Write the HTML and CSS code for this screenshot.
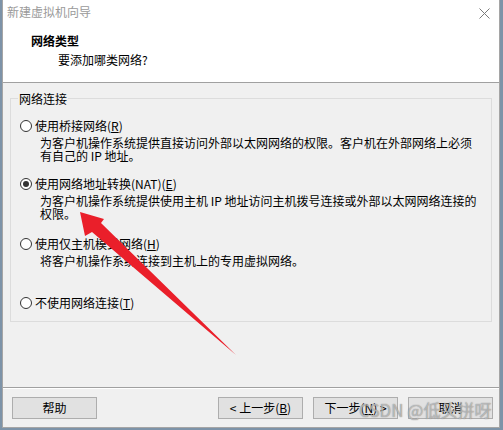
FILE: index.html
```html
<!DOCTYPE html>
<html lang="zh-CN">
<head>
<meta charset="utf-8">
<title>新建虚拟机向导</title>
<link rel="stylesheet" href="styles.css">
</head>
<body>
<div class="window">
  <div class="titlebar">
    <span class="title">新建虚拟机向导</span>
    <svg class="close" width="11" height="11" viewBox="0 0 11 11"><path d="M0.5 0.5 L10.5 10.5 M10.5 0.5 L0.5 10.5" stroke="#7a7a7a" stroke-width="1" fill="none"/></svg>
  </div>
  <div class="header">
    <div class="h-title">网络类型</div>
    <div class="h-sub">要添加哪类网络?</div>
  </div>
  <div class="content">
    <fieldset class="group">
      <legend>网络连接</legend>
      <div class="option o1">
        <div class="opt-label"><span class="radio"></span><span>使用桥接网络(<u>R</u>)</span></div>
        <div class="opt-desc">为客户机操作系统提供直接访问外部以太网网络的权限。客户机在外部网络上必须<br>有自己的 IP 地址。</div>
      </div>
      <div class="option o2">
        <div class="opt-label"><span class="radio checked"></span><span>使用网络地址转换(NAT)(<u>E</u>)</span></div>
        <div class="opt-desc">为客户机操作系统提供使用主机 IP 地址访问主机拨号连接或外部以太网网络连接的<br>权限。</div>
      </div>
      <div class="option o3">
        <div class="opt-label"><span class="radio"></span><span>使用仅主机模式网络(<u>H</u>)</span></div>
        <div class="opt-desc">将客户机操作系统连接到主机上的专用虚拟网络。</div>
      </div>
      <div class="option o4">
        <div class="opt-label"><span class="radio"></span><span>不使用网络连接(<u>T</u>)</span></div>
      </div>
    </fieldset>
  </div>
  <div class="footer">
    <button class="btn">帮助</button>
    <div class="btn-group">
      <button class="btn">&lt; 上一步(<u>B</u>)</button>
      <button class="btn">下一步(<u>N</u>) &gt;</button>
      <button class="btn">取消</button>
    </div>
  </div>
</div>
<svg class="arrow" width="503" height="430" viewBox="0 0 503 430">
  <polygon points="80,212 104,219 101,223 236,355 92,232 85,236" fill="#ea1f2a"/>
</svg>
<div class="watermark">CSDN @低头拼呀</div>
</body>
</html>
```
FILE: styles.css
```css
html, body {
  margin: 0;
  padding: 0;
}
body {
  width: 503px;
  height: 430px;
  background: #7d93a8;
  font-family: "Noto Sans CJK SC", "Noto Sans", sans-serif;
  font-size: 12px;
  color: #000;
  position: relative;
  overflow: hidden;
}
.window {
  margin-left: 2px;
  width: 498px;
  height: 428px;
  box-sizing: border-box;
  border-left: 1px solid #a5a5a5;
  border-right: 1px solid #a5a5a5;
  border-bottom: 1px solid #a5a5a5;
  background: #f0f0f0;
  display: flex;
  flex-direction: column;
}
.titlebar {
  height: 26px;
  background: #fff;
  display: flex;
  justify-content: space-between;
  align-items: flex-start;
  padding: 5px 9px 0 4px;
  box-sizing: border-box;
}
.title {
  line-height: 14px;
  color: #9a9a9a;
}
.close {
  margin-top: 3px;
  display: block;
}
.header {
  height: 57px;
  box-sizing: border-box;
  background: #fff;
  border-bottom: 1px solid #a0a0a0;
  padding-top: 8px;
}
.h-title {
  padding-left: 28px;
  font-weight: bold;
  line-height: 14px;
}
.h-sub {
  padding-left: 55px;
  margin-top: 5px;
  line-height: 14px;
}
.content {
  height: 305px;
  box-sizing: border-box;
  border-bottom: 1px solid #a0a0a0;
  box-shadow: 0 1px 0 #fff;
  padding: 9px 7px 0 7px;
}
.group {
  margin: 0;
  padding: 0 0 12px 9px;
  border: 1px solid #dcdcdc;
  min-width: 0;
}
.group legend {
  margin-left: -2px;
  padding: 0 1px;
  line-height: 13px;
}
.option {
  line-height: 13px;
}
.o1 { margin-top: 14px; }
.o2 { margin-top: 15px; }
.o3 { margin-top: 17px; }
.o4 { margin-top: 29px; }
.opt-label {
  display: flex;
  align-items: center;
  height: 13px;
  white-space: nowrap;
}
.radio {
  width: 12px;
  height: 12px;
  box-sizing: border-box;
  border: 1px solid #333;
  border-radius: 50%;
  background: #fff;
  margin-right: 3px;
  display: flex;
  align-items: center;
  justify-content: center;
  flex: none;
}
.radio.checked::after {
  content: "";
  width: 6px;
  height: 6px;
  border-radius: 50%;
  background: #333;
}
.opt-desc {
  margin-top: 4px;
  margin-left: 20px;
  white-space: nowrap;
}
u {
  text-decoration: underline;
  text-underline-offset: 1px;
}
.footer {
  flex: 1;
  display: flex;
  align-items: flex-start;
  padding: 9px 6px 0 9px;
}
.btn-group {
  margin-left: auto;
  display: flex;
  gap: 10px;
}
.btn {
  width: 85px;
  height: 22px;
  margin: 0;
  padding: 0;
  box-sizing: border-box;
  background: #e1e1e1;
  border: 1px solid #adadad;
  font-family: "Noto Sans CJK SC", "Noto Sans", sans-serif;
  font-size: 12px;
  line-height: 18px;
  color: #000;
}
.arrow {
  position: absolute;
  left: 0;
  top: 0;
  pointer-events: none;
}
.watermark {
  position: absolute;
  left: 359px;
  top: 399px;
  font-size: 17px;
  line-height: 22px;
  color: rgba(235, 235, 235, 0.55);
  text-shadow: 0 0 1px rgba(90, 90, 90, 0.9);
  white-space: nowrap;
  pointer-events: none;
}
```
